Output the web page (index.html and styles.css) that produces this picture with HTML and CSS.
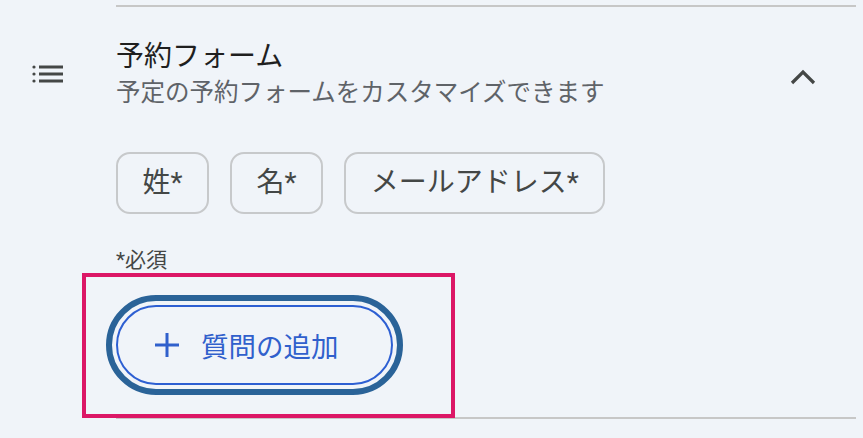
FILE: index.html
```html
<!DOCTYPE html>
<html lang="ja">
<head>
    <meta charset="UTF-8">
    <meta name="viewport" content="width=device-width, initial-scale=1.0">
    <title>予約フォーム</title>
    <link rel="stylesheet" href="styles.css">
</head>
<body>

    <div class="panel">
        <div class="divider"></div>

        <div class="section-head">
            <div class="head-icon">
                <svg width="32" height="18" viewBox="0 0 32 18">
                    <circle cx="2" cy="2" r="1.6"/>
                    <circle cx="2" cy="9" r="1.6"/>
                    <circle cx="2" cy="16" r="1.6"/>
                    <rect x="7" y="0.5" width="24" height="3"/>
                    <rect x="7" y="7.5" width="24" height="3"/>
                    <rect x="7" y="14.5" width="24" height="3"/>
                </svg>
            </div>
            <div class="head-text">
                <h2 class="title">予約フォーム</h2>
                <p class="subtitle">予定の予約フォームをカスタマイズできます</p>
            </div>
            <div class="chevron">
                <svg width="28" height="16" viewBox="0 0 28 16">
                    <polyline points="3,14 14,3 25,14" fill="none" stroke="#444746" stroke-width="3.2"/>
                </svg>
            </div>
        </div>

        <div class="body">
            <div class="chips">
                <span class="chip">姓*</span>
                <span class="chip">名*</span>
                <span class="chip">メールアドレス*</span>
            </div>

            <p class="note">*必須</p>

            <div class="add-wrap">
                <button class="add-btn">
                    <svg width="24" height="24" viewBox="0 0 24 24">
                        <rect x="0" y="10.5" width="24" height="3"/>
                        <rect x="10.5" y="0" width="3" height="24"/>
                    </svg>
                    <span>質問の追加</span>
                </button>
                <div class="highlight"></div>
            </div>
        </div>

        <div class="divider bottom"></div>
    </div>

</body>
</html>
```

FILE: styles.css
```css
body { margin: 0; padding: 0; background: #f0f4f9; font-family: Roboto, "Noto Sans CJK JP", sans-serif; overflow: hidden; }

.panel { width: 863px; height: 438px; }

.divider { margin-left: 116px; width: 740px; height: 2px; background: #c7c7c7; margin-top: 5px; }
.divider.bottom { margin-top: 32px; }

.section-head { display: flex; align-items: center; margin-top: 31px; }
.head-icon { width: 116px; padding-left: 32px; box-sizing: border-box; display: flex; align-items: center; }
.head-icon svg { fill: #444746; }
.head-text { flex: 1; }
.title { margin: 0; font-size: 28px; line-height: 38px; font-weight: 400; color: #1f1f1f; }
.subtitle { margin: 0; font-size: 24.5px; line-height: 34px; color: #5f6368; }
.chevron { padding-right: 46px; padding-top: 6px; display: flex; }

.body { padding-left: 116px; }

.chips { display: flex; gap: 21px; margin-top: 42px; }
.chip { height: 62px; box-sizing: border-box; border: 2px solid #c7c9cb; border-radius: 14px; padding: 0 24.5px; font-size: 28px; line-height: 58px; color: #444746; }

.note { margin: 31px 0 0; font-size: 21px; line-height: 30px; color: #444746; }

.add-wrap { position: relative; width: 277px; margin-top: 30px; }
.add-btn { display: flex; align-items: center; width: 277px; height: 80px; box-sizing: border-box; padding: 0 0 0 37px; gap: 22px; border: 2px solid #2d5fd2; border-radius: 40px; background: transparent; outline: 6px solid #2a6398; outline-offset: 4px; font-family: Roboto, "Noto Sans CJK JP", sans-serif; font-size: 27.5px; color: #3060cc; }
.add-btn svg { fill: #3060cc; flex: none; }
.highlight { position: absolute; left: -34px; top: -32px; right: -62px; bottom: -33px; border: 4px solid #dc1766; }
```
